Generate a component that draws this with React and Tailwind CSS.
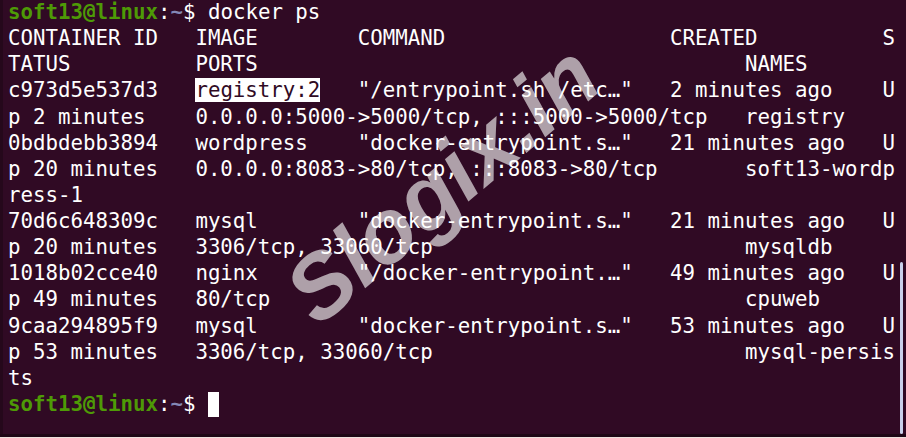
const row = (...cells) => {
  let s = "";
  for (const [col, text] of cells) s = s.padEnd(col, " ") + text;
  return s;
};

const before = [
  row([0, "CONTAINER ID"], [15, "IMAGE"], [28, "COMMAND"], [53, "CREATED"], [70, "S"]),
  row([0, "TATUS"], [15, "PORTS"], [59, "NAMES"]),
];

const after = [
  row([0, "p 2 minutes"], [15, "0.0.0.0:5000->5000/tcp, :::5000->5000/tcp"], [59, "registry"]),
  row([0, "0bdbdebb3894"], [15, "wordpress"], [28, '"docker-entrypoint.s…"'], [53, "21 minutes ago"], [70, "U"]),
  row([0, "p 20 minutes"], [15, "0.0.0.0:8083->80/tcp, :::8083->80/tcp"], [59, "soft13-wordp"]),
  "ress-1",
  row([0, "70d6c648309c"], [15, "mysql"], [28, '"docker-entrypoint.s…"'], [53, "21 minutes ago"], [70, "U"]),
  row([0, "p 20 minutes"], [15, "3306/tcp, 33060/tcp"], [59, "mysqldb"]),
  row([0, "1018b02cce40"], [15, "nginx"], [28, '"/docker-entrypoint.…"'], [53, "49 minutes ago"], [70, "U"]),
  row([0, "p 49 minutes"], [15, "80/tcp"], [59, "cpuweb"]),
  row([0, "9caa294895f9"], [15, "mysql"], [28, '"docker-entrypoint.s…"'], [53, "53 minutes ago"], [70, "U"]),
  row([0, "p 53 minutes"], [15, "3306/tcp, 33060/tcp"], [59, "mysql-persis"]),
  "ts",
];

function Prompt({ children }) {
  return (
    <div>
      <span className="font-bold text-[#4e9a06]">soft13@linux</span>
      <span>:</span>
      <span className="font-bold text-[#8488b5]">~</span>
      <span>$ </span>
      {children}
    </div>
  );
}

export default function App() {
  return (
    <div className="relative w-[906px] h-[438px] overflow-hidden bg-[#300a24] flex flex-col">
      {/* watermark */}
      <div className="absolute left-[442px] top-[184px] -translate-x-1/2 -translate-y-1/2 -rotate-[40deg] text-[90px] font-bold italic text-[#c4bbc1]/85 font-['Liberation_Sans',Arial,sans-serif] whitespace-nowrap select-none pointer-events-none">
        Slogix.in
      </div>

      <div className="relative flex-1 flex">
        <div className="w-[3px] bg-[#25081b]" />
        <pre className="flex-1 pl-[5px] -mt-px font-['DejaVu_Sans_Mono',monospace] text-[20.76px] leading-[26.13px] text-white whitespace-pre">
          <Prompt>docker ps</Prompt>
          {before.map((l, i) => (
            <div key={"b" + i}>{l}</div>
          ))}
          <div>
            {row([0, "c973d5e537d3"], [15, ""])}
            <span className="bg-white text-[#300a24]">registry:2</span>
            {row([3, '"/entrypoint.sh /etc…"'], [28, "2 minutes ago"], [45, "U"])}
          </div>
          {after.map((l, i) => (
            <div key={"a" + i}>{l}</div>
          ))}
          <Prompt>
            <span className="inline-block w-[11px] h-[25px] align-top mt-px bg-white" />
          </Prompt>
        </pre>

        {/* scrollbar */}
        <div className="absolute right-[3px] top-[262px] bottom-0 w-[3px] rounded-full bg-[#c9d0ea]" />
      </div>
      <div className="h-[3px] bg-[#1f0716]" />
      <div className="h-px bg-[#eee0dc]" />
    </div>
  );
}
